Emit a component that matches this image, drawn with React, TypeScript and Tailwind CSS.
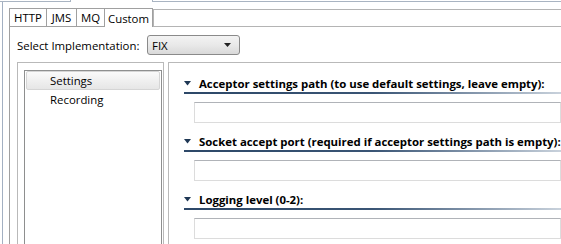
import React from 'react'

const FONT = { fontFamily: '"Open Sans", "Noto Sans", sans-serif' }

export default function App() {
  return (
    <div className="w-[561px] h-[244px] overflow-hidden bg-white text-[11.4px] text-black" style={FONT}>
      {/* outer frame top edge */}
      <div className="flex h-[2px]">
        <div className="w-[70px] border-b border-[#a9b4c2]" />
        <div className="w-[83px] border-l border-r border-[#a9b4c2]" />
        <div className="flex-1 border-b border-[#a9b4c2]" />
      </div>
      <div className="ml-[2px] h-[242px] border-l border-[#a3b0c2] pl-[6px] pt-[6px]">
        <TabFolder />
      </div>
    </div>
  )
}

function TabFolder() {
  return (
    <div className="flex flex-col h-full">
      {/* tabs */}
      <div className="flex h-[21px]">
        <Tab label="HTTP" w="w-[38px]" first />
        <Tab label="JMS" w="w-[30px]" />
        <Tab label="MQ" w="w-[28px]" />
        <Tab label="Custom" w="w-[48px]" selected />
        <div className="flex-1 mt-[1px] border-t border-l border-b border-[#b4b4b4] bg-white" />
      </div>
      <div className="flex-1 border-l border-[#a0a0a0] pl-[7px]">
        {/* implementation row */}
        <div className="flex items-center h-[20px] mt-[8px]">
          <span className="w-[130px]">Select Implementation:</span>
          <div className="w-[93px] h-[20px] rounded-[3px] border border-[#8a8a8a] bg-gradient-to-b from-[#f3f3f3] via-[#e9e9e9] to-[#d9d9d9] flex items-center pl-[4px] pr-[7px]">
            <span className="flex-1">FIX</span>
            <svg width="8" height="4" viewBox="0 0 8 4">
              <path d="M0 0h7L3.5 4z" fill="#222" />
            </svg>
          </div>
        </div>

        {/* master / details */}
        <div className="flex mt-[7px] h-[200px]">
          <div className="w-[147px] border-t border-l border-r border-[#b9b9b9] pl-[6px] pt-[7px]">
            <div className="h-full w-[138px] border-t border-l border-r border-[#8e8f8f] pl-[1px] pt-0">
              <div className="w-[134px] h-[19px] rounded-[2px] border border-[#d5d5d5] bg-gradient-to-b from-[#fafafa] to-[#e6e6e6] flex items-center pl-[23px]">
                Settings
              </div>
              <div className="h-[18px] flex items-center pl-[24px]">Recording</div>
            </div>
          </div>
          <div className="flex-1 ml-[4px] border-t border-l border-[#b9b9b9] pl-[15px] pt-[12px]">
            <Section title="Acceptor settings path (to use default settings, leave empty):" />
            <Section title="Socket accept port (required if acceptor settings path is empty):" />
            <Section title="Logging level (0-2):" />
          </div>
        </div>
      </div>
    </div>
  )
}

function Tab({ label, w, selected, first }: { label: string; w: string; selected?: boolean; first?: boolean }) {
  return (
    <div
      className={`${w} flex items-center justify-center border-t border-r border-[#a0a0a0] bg-white ${first ? 'border-l' : ''} ${
        selected ? 'border-b-0' : 'border-b'
      }`}
    >
      {label}
    </div>
  )
}

function Section({ title }: { title: string }) {
  return (
    <div className="mb-[10px]">
      <div className="flex items-center h-[17px]">
        <svg width="8" height="5" viewBox="0 0 8 5" className="mr-[7px]">
          <path d="M0 0h7L3.5 4.5z" fill="#1e3754" />
        </svg>
        <span className="font-bold whitespace-nowrap">{title}</span>
      </div>
      <div className="h-[2px] bg-gradient-to-r from-[#2d4868] via-[#3a5575] to-[#c9d2dc]" />
      <div className="ml-[10px] mt-[8px] h-[21px] border border-[#dcdcdc] border-t-[#b0b3b8]" />
    </div>
  )
}
